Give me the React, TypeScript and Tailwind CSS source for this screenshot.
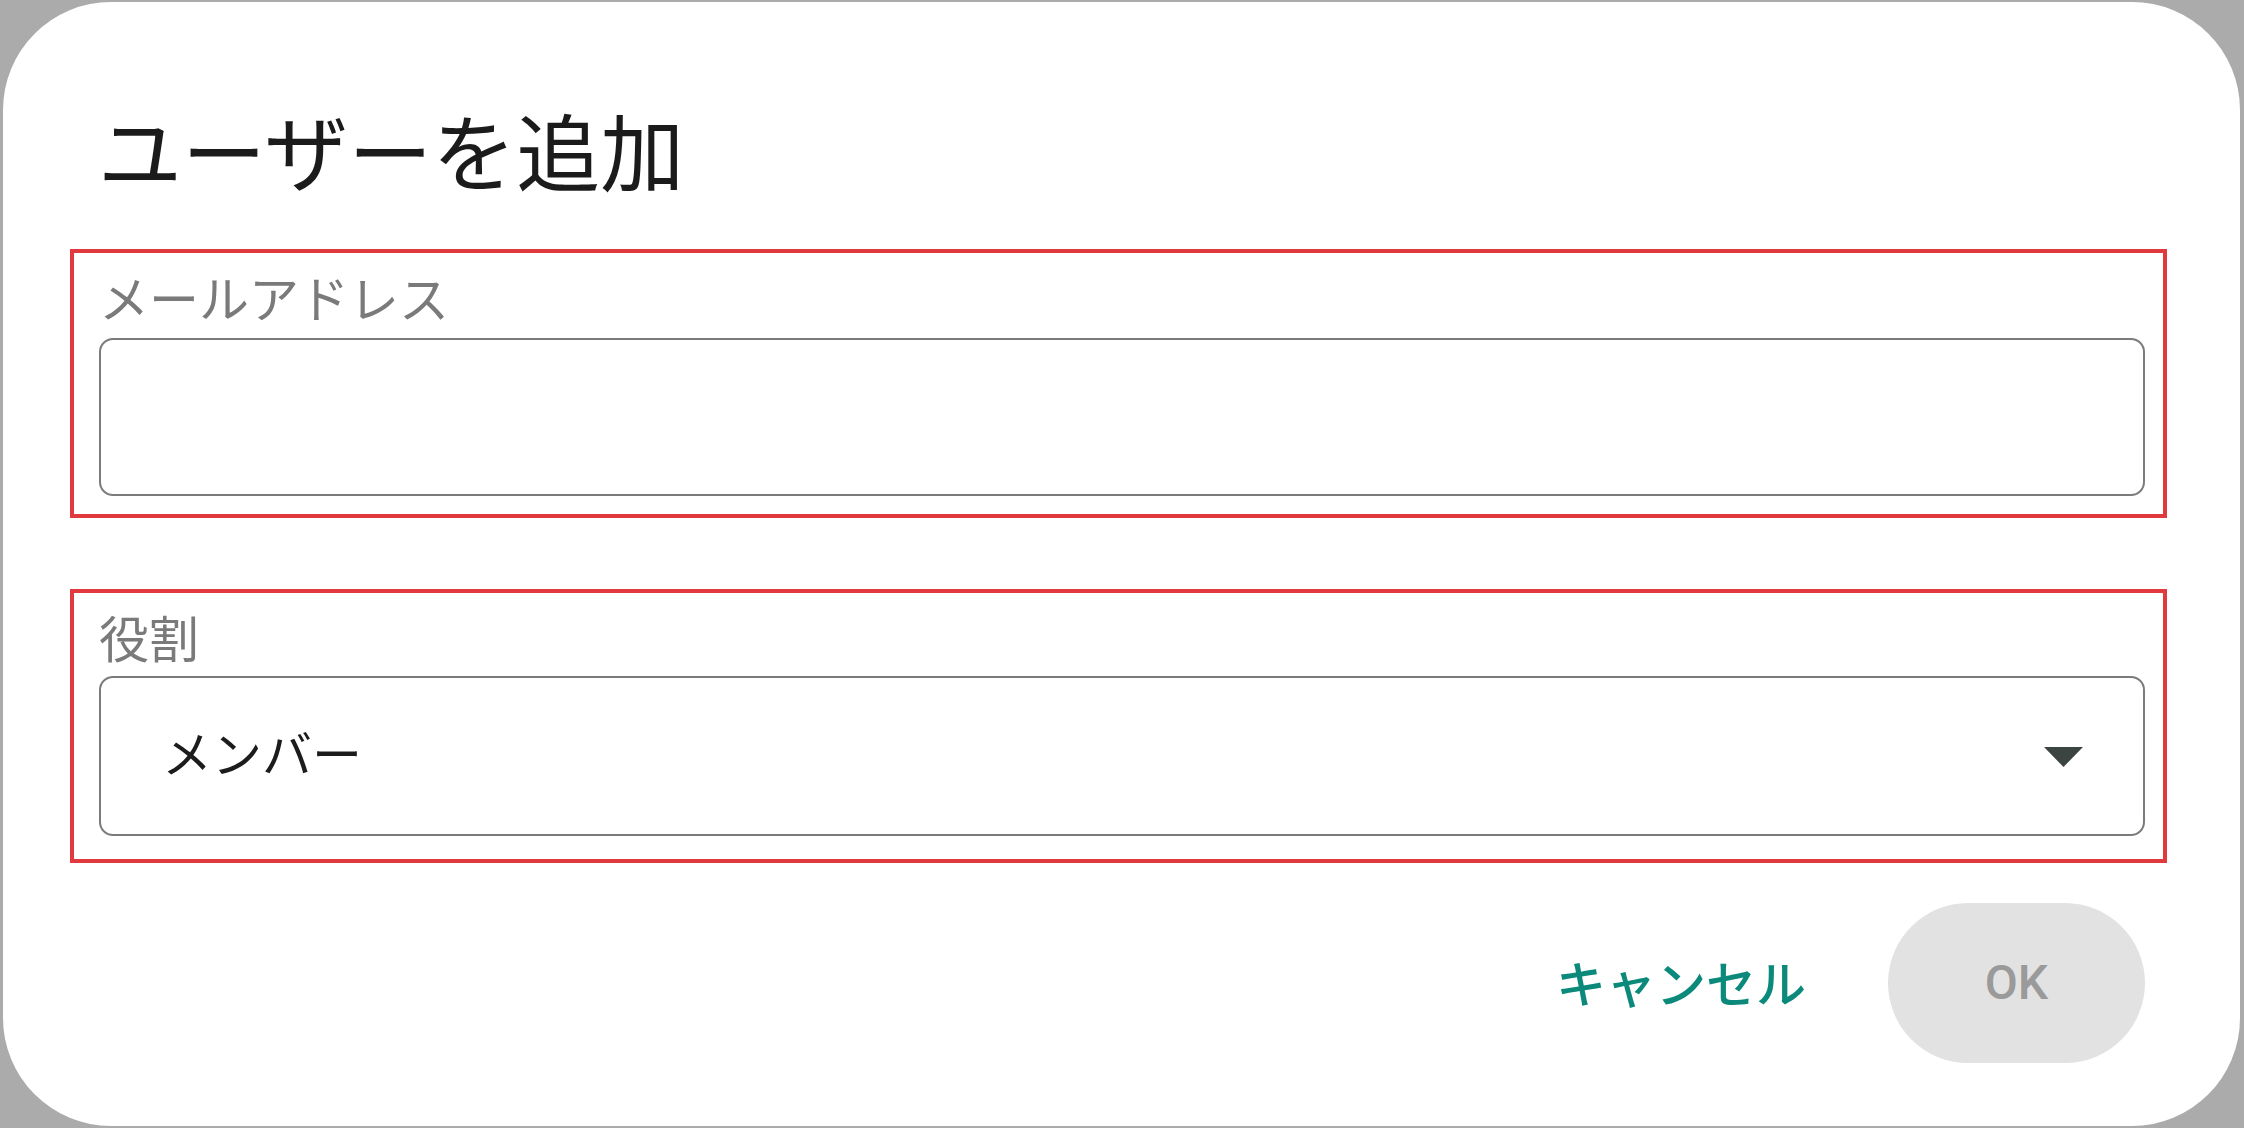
import React from "react";

const FONT = 'Roboto, "Noto Sans CJK JP", "Noto Sans", sans-serif';

export default function App() {
  return (
    <div
      className="w-[2244px] h-[1128px] bg-[#ababab] pt-[2px] pl-[3px] pr-[4px] pb-[2px] flex"
      style={{ fontFamily: FONT }}
    >
      <div className="flex-1 flex flex-col bg-white rounded-[108px] pl-[67px] pr-[73px]">
        <h1 className="mt-[113px] ml-[28px] text-[84px] leading-none font-normal text-[#1b1b1b]">
          ユーザーを追加
        </h1>

        <div className="mt-[50px] border-4 border-[#e03a3e] pt-[23px] pl-[25px] pr-[18px] pb-[18px]">
          <div className="text-[50px] leading-none text-[#7a7a7a]">メールアドレス</div>
          <div className="mt-[12px] h-[158px] border-2 border-[#7b7b7b] rounded-[14px]" />
        </div>

        <div className="mt-[71px] border-4 border-[#e03a3e] pt-[23px] pl-[25px] pr-[18px] pb-[23px]">
          <div className="text-[50px] leading-none text-[#7a7a7a]">役割</div>
          <div className="mt-[10px] h-[160px] border-2 border-[#7b7b7b] rounded-[14px] flex items-center justify-between pl-[61px] pr-[60px]">
            <span className="text-[50px] leading-none text-[#1c1c1c]">メンバー</span>
            <svg width="39" height="20" viewBox="0 0 39 20" className="mt-[2px]">
              <polygon points="0,0 39,0 19.5,20" fill="#3c4442" />
            </svg>
          </div>
        </div>

        <div className="mt-[40px] flex justify-end items-center pr-[22px]">
          <button className="mr-[82px] text-[50px] leading-none font-medium text-[#0b8a7b] mt-[6px]">
            キャンセル
          </button>
          <button className="w-[257px] h-[160px] rounded-full bg-[#e2e2e2] text-[48px] leading-none font-medium text-[#9a9a9a] flex items-center justify-center">
            OK
          </button>
        </div>
      </div>
    </div>
  );
}
